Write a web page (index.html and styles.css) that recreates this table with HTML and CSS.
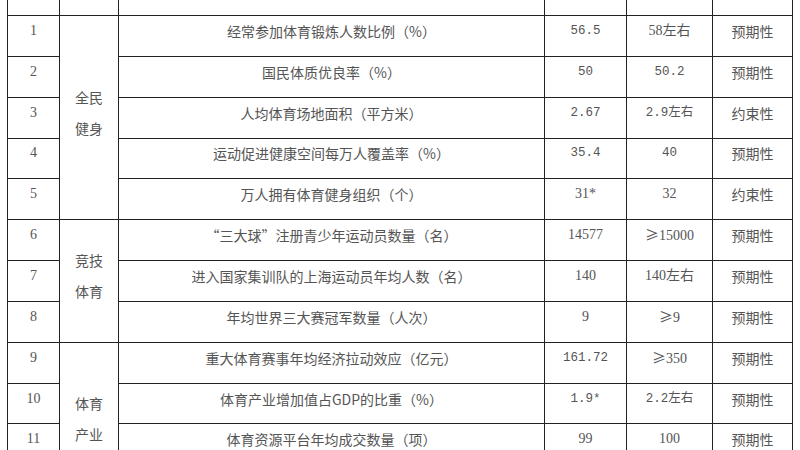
FILE: index.html
```html
<!DOCTYPE html>
<html lang="zh-CN">
<head>
<meta charset="utf-8">
<title>体育发展主要指标</title>
<link rel="stylesheet" href="styles.css">
</head>
<body>
<table class="grid">
  <colgroup>
    <col class="c-no">
    <col class="c-cat">
    <col class="c-name">
    <col class="c-base">
    <col class="c-goal">
    <col class="c-attr">
  </colgroup>
  <tbody>
    <tr class="head">
      <td></td><td></td><td></td><td></td><td></td><td></td>
    </tr>
    <tr>
      <td class="num">1</td>
      <td class="cat" rowspan="5"><span>全民</span><span>健身</span></td>
      <td>经常参加体育锻炼人数比例（%）</td>
      <td class="mono">56.5</td>
      <td class="num">58左右</td>
      <td>预期性</td>
    </tr>
    <tr>
      <td class="num">2</td>
      <td>国民体质优良率（%）</td>
      <td class="mono">50</td>
      <td class="mono">50.2</td>
      <td>预期性</td>
    </tr>
    <tr>
      <td class="num">3</td>
      <td>人均体育场地面积（平方米）</td>
      <td class="mono">2.67</td>
      <td class="mono">2.9左右</td>
      <td>约束性</td>
    </tr>
    <tr>
      <td class="num">4</td>
      <td>运动促进健康空间每万人覆盖率（%）</td>
      <td class="mono">35.4</td>
      <td class="mono">40</td>
      <td>预期性</td>
    </tr>
    <tr>
      <td class="num">5</td>
      <td>万人拥有体育健身组织（个）</td>
      <td class="num">31*</td>
      <td class="num">32</td>
      <td>约束性</td>
    </tr>
    <tr>
      <td class="num">6</td>
      <td class="cat" rowspan="3"><span>竞技</span><span>体育</span></td>
      <td>“三大球”注册青少年运动员数量（名）</td>
      <td class="num">14577</td>
      <td class="num"><span class="ge">≥</span>15000</td>
      <td>预期性</td>
    </tr>
    <tr>
      <td class="num">7</td>
      <td>进入国家集训队的上海运动员年均人数（名）</td>
      <td class="num">140</td>
      <td class="num">140左右</td>
      <td>预期性</td>
    </tr>
    <tr>
      <td class="num">8</td>
      <td>年均世界三大赛冠军数量（人次）</td>
      <td class="num">9</td>
      <td class="num"><span class="ge">≥</span>9</td>
      <td>预期性</td>
    </tr>
    <tr>
      <td class="num">9</td>
      <td class="cat" rowspan="4"><span>体育</span><span>产业</span></td>
      <td>重大体育赛事年均经济拉动效应（亿元）</td>
      <td class="mono">161.72</td>
      <td class="num"><span class="ge">≥</span>350</td>
      <td>预期性</td>
    </tr>
    <tr>
      <td class="num">10</td>
      <td>体育产业增加值占GDP的比重（%）</td>
      <td class="mono">1.9*</td>
      <td class="mono">2.2左右</td>
      <td>预期性</td>
    </tr>
    <tr>
      <td class="num">11</td>
      <td>体育资源平台年均成交数量（项）</td>
      <td class="num">99</td>
      <td class="num">100</td>
      <td>预期性</td>
    </tr>
    <tr>
      <td class="num">12</td>
      <td>体育产业总规模（亿元）</td>
      <td class="num">1780</td>
      <td class="num">3000</td>
      <td>预期性</td>
    </tr>
  </tbody>
</table>
</body>
</html>
```

FILE: styles.css
```css
html, body {
  margin: 0;
  padding: 0;
  background: #ffffff;
  overflow: hidden;
}

body {
  font-family: "Noto Sans CJK SC", sans-serif;
  font-size: 14px;
  color: #555555;
}

.grid {
  margin-left: 7px;
  width: 785px;
  table-layout: fixed;
  border-collapse: collapse;
}

.c-no { width: 52px; }
.c-cat { width: 59px; }
.c-name { width: 426px; }
.c-base { width: 82px; }
.c-goal { width: 86px; }
.c-attr { width: 80px; }

.grid td {
  border: 1px solid #222222;
  text-align: center;
  vertical-align: middle;
  padding: 0 2px 10px;
  height: 29.85px;
  line-height: 20px;
  white-space: nowrap;
}

.grid tr.head td {
  border-top: none;
  height: 15px;
  padding: 0;
}

.grid td.num {
  font-family: "Liberation Serif", "Noto Sans CJK SC", serif;
  font-size: 14px;
}

.grid td.mono {
  font-family: "Liberation Mono", "Noto Sans CJK SC", monospace;
  font-size: 12.5px;
}

.grid td.num .ge {
  font-family: "Noto Sans CJK SC", sans-serif;
}

.grid td.cat span {
  display: block;
  line-height: 31px;
}
```
